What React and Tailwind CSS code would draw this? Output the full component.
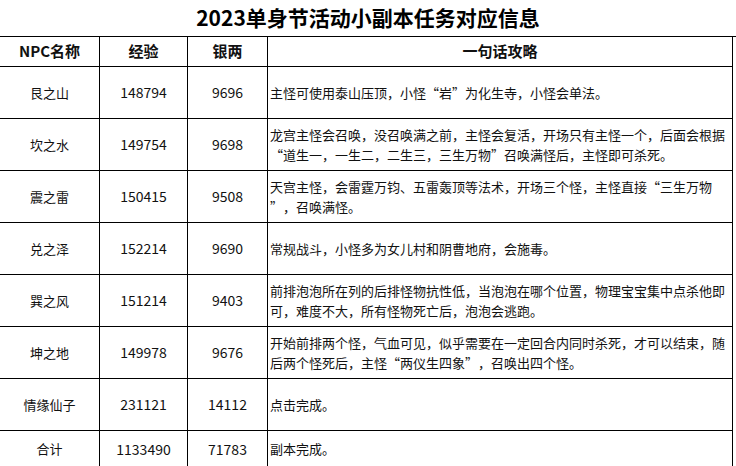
const rows = [
  { name: '艮之山', exp: '148794', silver: '9696', tip: ['主怪可使用泰山压顶，小怪“岩”为化生寺，小怪会单法。'] },
  {
    name: '坎之水',
    exp: '149754',
    silver: '9698',
    tip: ['龙宫主怪会召唤，没召唤满之前，主怪会复活，开场只有主怪一个，后面会根据', '“道生一，一生二，二生三，三生万物”召唤满怪后，主怪即可杀死。'],
  },
  {
    name: '震之雷',
    exp: '150415',
    silver: '9508',
    tip: ['天宫主怪，会雷霆万钧、五雷轰顶等法术，开场三个怪，主怪直接“三生万物', '”，召唤满怪。'],
  },
  { name: '兑之泽', exp: '152214', silver: '9690', tip: ['常规战斗，小怪多为女儿村和阴曹地府，会施毒。'] },
  {
    name: '巽之风',
    exp: '151214',
    silver: '9403',
    tip: ['前排泡泡所在列的后排怪物抗性低，当泡泡在哪个位置，物理宝宝集中点杀他即', '可，难度不大，所有怪物死亡后，泡泡会逃跑。'],
  },
  {
    name: '坤之地',
    exp: '149978',
    silver: '9676',
    tip: ['开始前排两个怪，气血可见，似乎需要在一定回合内同时杀死，才可以结束，随', '后两个怪死后，主怪“两仪生四象”，召唤出四个怪。'],
  },
  { name: '情缘仙子', exp: '231121', silver: '14112', tip: ['点击完成。'] },
  { name: '合计', exp: '1133490', silver: '71783', tip: ['副本完成。'], last: true },
];

const font = "font-['Noto_Sans_CJK_SC',sans-serif]";

// full-width curly quotes, like the spreadsheet font draws them
const Line = ({ text }) => (
  <span>
    {text.split(/([“”])/).map((part, i) => {
      if (part === '“') return <span key={i} className="inline-block w-[1em] text-right">“</span>;
      if (part === '”') return <span key={i} className="inline-block w-[1em] text-left">”</span>;
      return part;
    })}
  </span>
);

export default function App() {
  return (
    <div className={`w-[736px] h-[466px] overflow-hidden bg-white text-[#111] ${font}`}>
      <div className="h-9 flex items-center justify-center text-[21px] font-bold text-black">
        2023单身节活动小副本任务对应信息
      </div>
      <div className="grid grid-cols-[100px_88px_80px_465px] border-t border-black">
        {/* header */}
        <div className="h-[30px] border-r border-b border-black flex items-center justify-center text-[15px] font-bold">NPC名称</div>
        <div className="h-[30px] border-r border-b border-black flex items-center justify-center text-[15px] font-bold">经验</div>
        <div className="h-[30px] border-r border-b border-black flex items-center justify-center text-[15px] font-bold">银两</div>
        <div className="h-[30px] border-r border-b border-black flex items-center justify-center text-[15px] font-bold">一句话攻略</div>

        {rows.map((r) => {
          const h = r.last ? 'h-[37px]' : 'h-[52px]';
          return (
            <div key={r.name} className="contents">
              <div className={`${h} border-r border-b border-black flex items-center justify-center text-[13px]`}>{r.name}</div>
              <div className={`${h} border-r border-b border-black flex items-center justify-center text-[14px]`}>{r.exp}</div>
              <div className={`${h} border-r border-b border-black flex items-center justify-center text-[14px]`}>{r.silver}</div>
              <div className={`${h} border-r border-b border-black flex flex-col justify-center pl-[2px] text-[13px] leading-5 whitespace-nowrap`}>
                {r.tip.map((line, i) => (
                  <Line key={i} text={line} />
                ))}
              </div>
            </div>
          );
        })}
      </div>
    </div>
  );
}
